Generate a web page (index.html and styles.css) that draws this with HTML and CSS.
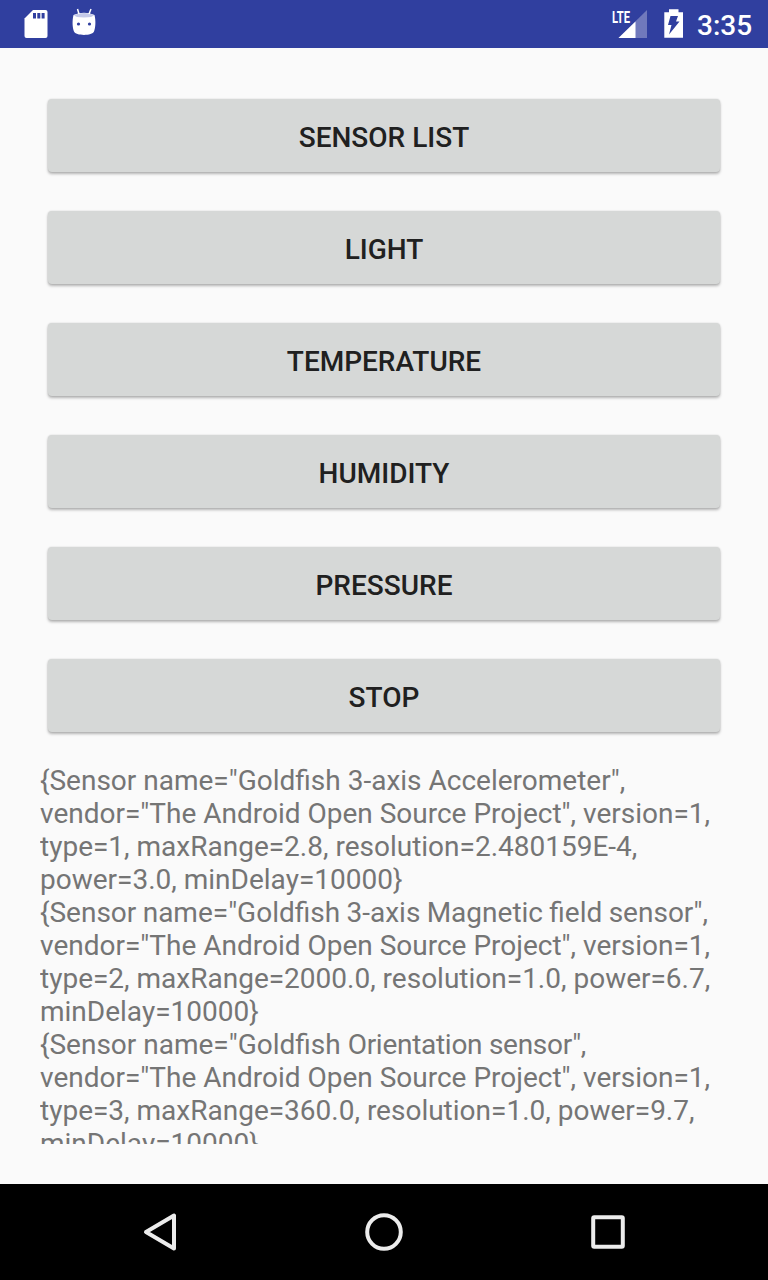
FILE: index.html
```html
<!DOCTYPE html>
<html lang="en">
<head>
<meta charset="utf-8">
<title>Sensors</title>
<link rel="stylesheet" href="styles.css">
</head>
<body>
<div class="screen">
<header class="status">
<svg class="left-icons" width="120" height="48" viewBox="0 0 120 48">
<path fill="#fff" d="M33 10h12.500q2 0 2 2v24q0 2-2 2H26.500q-2 0-2-2V18.500z"/>
<path fill="#303f9f" d="M33 13h3v5.500h-3zM37.300 13h3v5.500h-3zM41.600 13h3v5.500h-3z"/>
<path fill="#fff" d="M73.500 15q10.500-4.500 21 0c1.500 6 1 13-.5 16.500-1.500 4.500-18.500 4.500-20 0-1.500-3.500-2-10.500-.5-16.500z"/>
<path fill="#c5cae9" d="M74 15q10-4 20 0-1 2.500-10 2.500T74 15z"/>
<path fill="none" stroke="#fff" stroke-width="1.500" d="M77.500 9l1.500 5M91 9l-2 5"/>
<circle cx="78.500" cy="24" r="1.600" fill="#303f9f"/><circle cx="89.500" cy="24" r="1.600" fill="#303f9f"/>
</svg>
<div class="right">
<svg width="84" height="48" viewBox="608 0 84 48">
<path fill="#7079bc" d="M647 10v28h-28.500z"/><path fill="#fff" d="M635.500 21.500V38h-17z"/>
<text class="lte" x="612" y="22.500" textLength="18" lengthAdjust="spacingAndGlyphs">LTE</text>
<path fill="#fff" d="M669 9.300h9.500v3H683v25.500h-18.700V12.300h4.700z"/><path fill="#303f9f" d="M670.500 16h7.500l-2 5.500h3.500l-10.500 13 2.500-9.500H668z"/>
</svg>
<span class="clock">3:35</span>
</div>
</header>
<main class="content">
<div class="buttons">
<button class="btn">SENSOR LIST</button>
<button class="btn">LIGHT</button>
<button class="btn">TEMPERATURE</button>
<button class="btn">HUMIDITY</button>
<button class="btn">PRESSURE</button>
<button class="btn">STOP</button>
</div>
<div class="log">{Sensor name="Goldfish 3-axis Accelerometer",
vendor="The Android Open Source Project", version=1,
type=1, maxRange=2.8, resolution=2.480159E-4,
power=3.0, minDelay=10000}
<span class="snug">{Sensor name="Goldfish 3-axis Magnetic field sensor",</span>
vendor="The Android Open Source Project", version=1,
type=2, maxRange=2000.0, resolution=1.0, power=6.7,
minDelay=10000}
{Sensor name="Goldfish <span class="tight">Orientation sensor",</span>
vendor="The Android Open Source Project", version=1,
type=3, maxRange=360.0, resolution=1.0, power=9.7,
minDelay=10000}</div>
</main>
<nav class="nav">
<svg width="48" height="48" viewBox="136 1208 48 48"><path d="M174 1215.500v33l-28-16.500z"/></svg>
<svg width="48" height="48" viewBox="360 1208 48 48"><circle cx="384" cy="1232" r="16.800"/></svg>
<svg width="48" height="48" viewBox="584 1208 48 48"><rect x="593.200" y="1217.200" width="29.600" height="29.600" rx="1"/></svg>
</nav>
</div>
</body>
</html>
```
FILE: styles.css
```css
body { margin: 0; font-family: Roboto, sans-serif; }
.screen { display: flex; flex-direction: column; width: 768px; height: 1280px; background: #fafafa; overflow: hidden; }
.status { display: flex; justify-content: space-between; height: 48px; background: #303f9f; flex: none; }
.right { display: flex; padding-right: 16px; }
.clock { width: 55px; margin-left: 5px; font-size: 28px; font-weight: 500; line-height: 52px; color: #fff; text-align: right; white-space: nowrap; }
.lte { font: 700 16px Roboto, sans-serif; fill: #fff; }
.content { flex: 1; display: flex; flex-direction: column; padding: 51px 40px 40px; min-height: 0; }
.buttons { display: flex; flex-direction: column; gap: 39px; padding: 0 8px; }
.btn { height: 73px; padding: 5px 0 0; border: 0; border-radius: 4px; background: #d6d8d7; box-shadow: 0 2px 3px rgba(0,0,0,.28), 0 0 2px rgba(0,0,0,.14); color: #202020; font: 500 28px/32px Roboto, sans-serif; }
.log { margin-top: 32px; flex: 1; min-height: 0; overflow: hidden; white-space: pre; color: #757575; font-size: 28px; line-height: 33px; }
.snug { word-spacing: -0.6px; }
.tight { letter-spacing: -0.28px; }
.nav { display: flex; flex: none; height: 96px; background: #000; align-items: center; justify-content: space-between; padding: 0 136px; box-sizing: border-box; }
.nav svg { fill: none; stroke: #ececec; stroke-width: 4; stroke-linejoin: round; }
```
